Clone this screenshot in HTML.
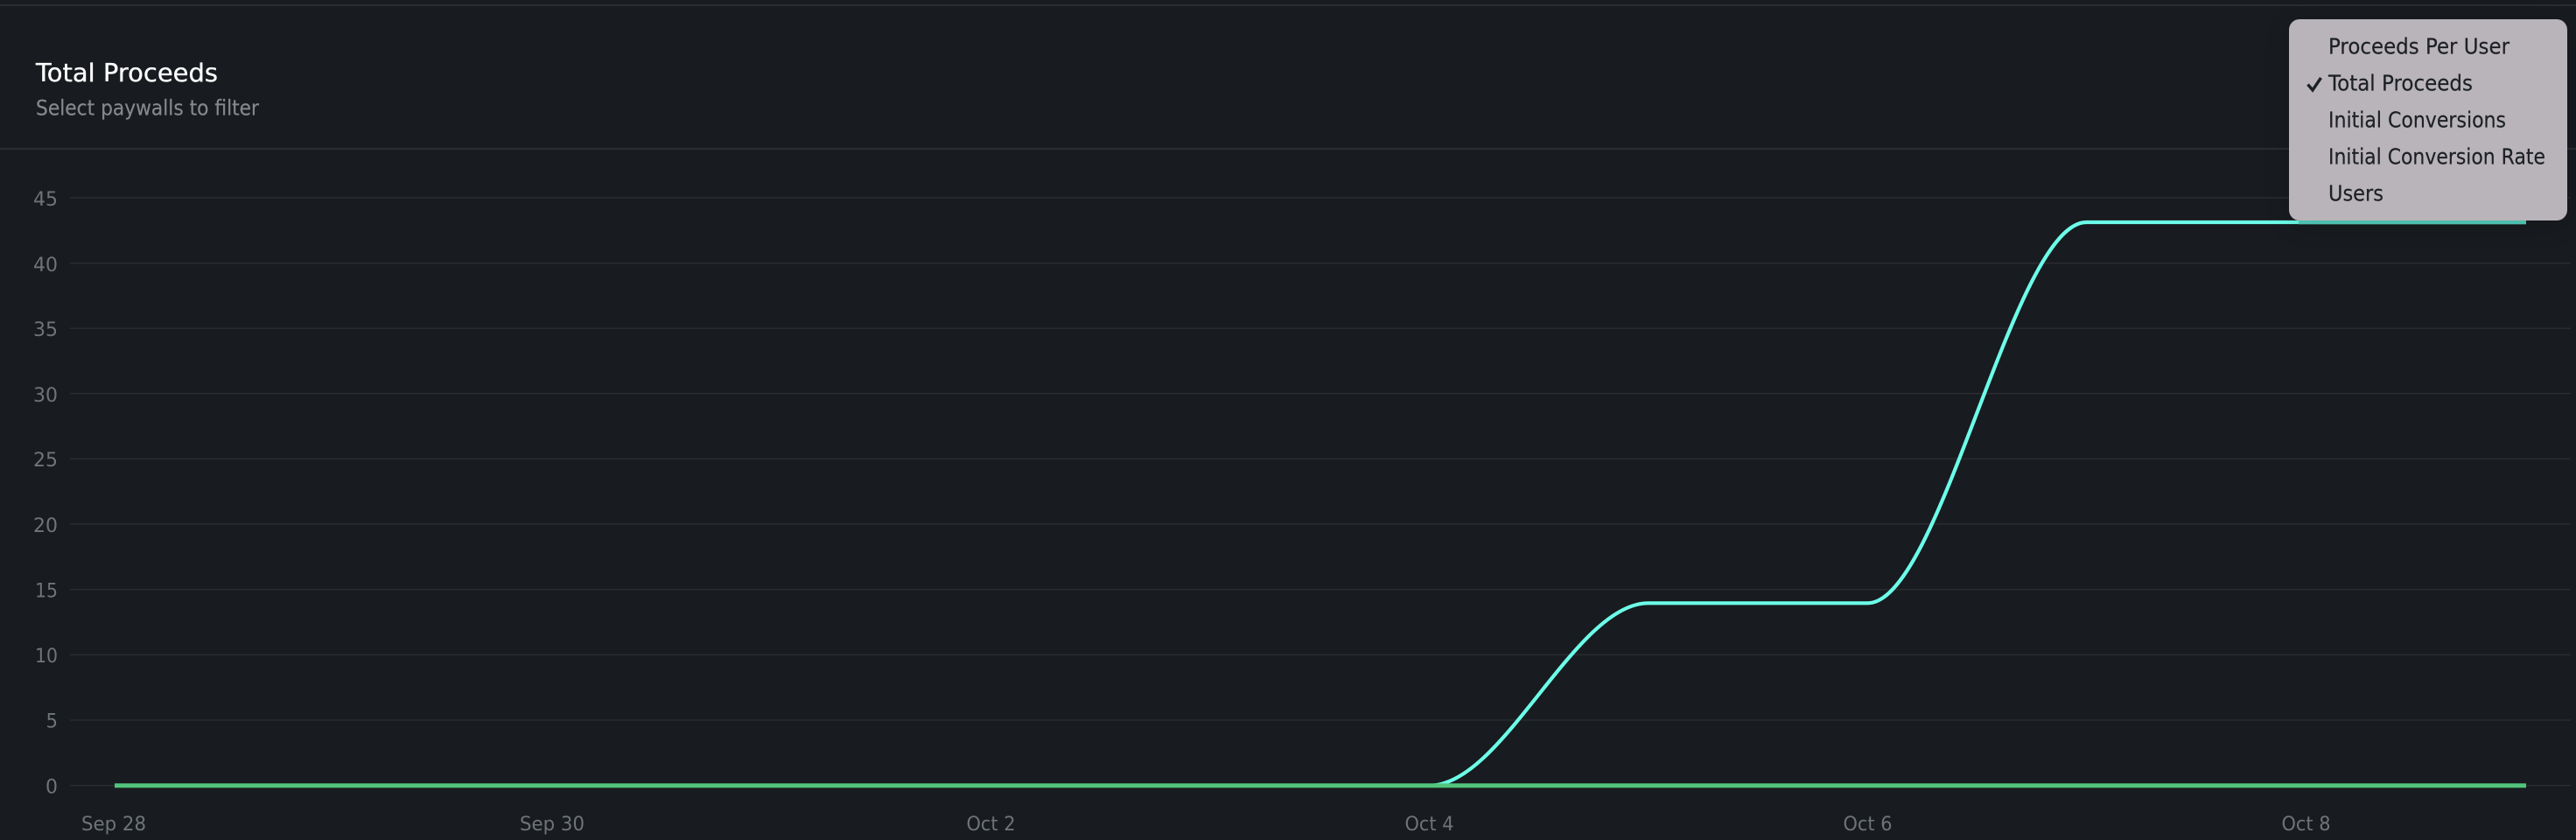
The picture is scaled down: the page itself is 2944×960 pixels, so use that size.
<!DOCTYPE html>
<html>
<head>
<meta charset="utf-8">
<style>
html,body{margin:0;padding:0;width:2944px;height:960px;overflow:hidden;background:#181b1f;}
svg{position:absolute;left:0;top:0;display:block;}
text{font-family:"DejaVu Sans","Liberation Sans",sans-serif;}
</style>
</head>
<body>
<svg width="2944" height="960" viewBox="0 0 2944 960" xmlns="http://www.w3.org/2000/svg">
<rect width="2944" height="960" fill="#181b1f"/>
<rect x="0" y="5" width="2944" height="2" fill="#2a2d31"/>
<rect x="0" y="169" width="2944" height="2" fill="#2a2e31"/>

<g fill="#282b2f">
<rect x="80" y="225.200" width="2858" height="1.600"/>
<rect x="80" y="300" width="2858" height="1.600"/>
<rect x="80" y="374.500" width="2858" height="1.600"/>
<rect x="80" y="449" width="2858" height="1.600"/>
<rect x="80" y="523.500" width="2858" height="1.600"/>
<rect x="80" y="598" width="2858" height="1.600"/>
<rect x="80" y="673" width="2858" height="1.600"/>
<rect x="80" y="747.500" width="2858" height="1.600"/>
<rect x="80" y="822.200" width="2858" height="1.600"/>
<rect x="80" y="897" width="2858" height="1.600"/>
</g>

<text x="41" y="93" font-size="28.500" fill="#ffffff" stroke="#ffffff" stroke-width="0.300" textLength="208" lengthAdjust="spacingAndGlyphs">Total Proceeds</text>
<text x="41" y="131.500" font-size="24" fill="#86898c" stroke="#86898c" stroke-width="0.200" textLength="255" lengthAdjust="spacingAndGlyphs">Select paywalls to filter</text>

<g font-size="22.500" fill="#6f7476" text-anchor="end">
<text x="66" y="235" textLength="28" lengthAdjust="spacingAndGlyphs">45</text>
<text x="66" y="310" textLength="28" lengthAdjust="spacingAndGlyphs">40</text>
<text x="66" y="384" textLength="28" lengthAdjust="spacingAndGlyphs">35</text>
<text x="66" y="459" textLength="28" lengthAdjust="spacingAndGlyphs">30</text>
<text x="66" y="533" textLength="28" lengthAdjust="spacingAndGlyphs">25</text>
<text x="66" y="608" textLength="28" lengthAdjust="spacingAndGlyphs">20</text>
<text x="66" y="682.500" textLength="26" lengthAdjust="spacingAndGlyphs">15</text>
<text x="66" y="757" textLength="26" lengthAdjust="spacingAndGlyphs">10</text>
<text x="66" y="831.500" textLength="13.500" lengthAdjust="spacingAndGlyphs">5</text>
<text x="66" y="906.500" textLength="14" lengthAdjust="spacingAndGlyphs">0</text>
</g>

<g font-size="22.500" fill="#6f7476" text-anchor="middle">
<text x="130" y="949" textLength="74" lengthAdjust="spacingAndGlyphs">Sep 28</text>
<text x="631" y="949" textLength="74" lengthAdjust="spacingAndGlyphs">Sep 30</text>
<text x="1132.500" y="949" textLength="56" lengthAdjust="spacingAndGlyphs">Oct 2</text>
<text x="1633.500" y="949" textLength="56" lengthAdjust="spacingAndGlyphs">Oct 4</text>
<text x="2134.500" y="949" textLength="56" lengthAdjust="spacingAndGlyphs">Oct 6</text>
<text x="2635.500" y="949" textLength="56" lengthAdjust="spacingAndGlyphs">Oct 8</text>
</g>

<path d="M131 897.700 H1634 C1717.500 897.700 1800 689.300 1883.500 689.300 H2134.500 C2218 689.300 2301 254 2384.500 254 H2887" fill="none" stroke="#6cffe9" stroke-width="4.200"/>
<rect x="2627" y="251.900" width="260" height="4.400" fill="#55d3c1"/>
<rect x="131" y="895.300" width="2756" height="5" fill="#52c47b"/>
</svg>

<div style="position:absolute;left:2616px;top:22px;width:318px;height:230px;border-radius:12px;background:#b9b4b9;box-shadow:0 6px 28px rgba(0,0,0,.16);"></div>

<svg width="2944" height="960" viewBox="0 0 2944 960" xmlns="http://www.w3.org/2000/svg">
<path d="M2637.500 96.500 L2643 103 L2652.500 89" fill="none" stroke="#1d2024" stroke-width="3.400"/>
<g font-size="25" fill="#1d2125" stroke="#1d2125" stroke-width="0.200">
<text x="2661" y="61.500" textLength="207" lengthAdjust="spacingAndGlyphs">Proceeds Per User</text>
<text x="2661" y="103.500" textLength="165" lengthAdjust="spacingAndGlyphs">Total Proceeds</text>
<text x="2661" y="145.500" textLength="203" lengthAdjust="spacingAndGlyphs">Initial Conversions</text>
<text x="2661" y="187.500" textLength="248" lengthAdjust="spacingAndGlyphs">Initial Conversion Rate</text>
<text x="2661" y="229.500" textLength="63" lengthAdjust="spacingAndGlyphs">Users</text>
</g>
</svg>
</body>
</html>
